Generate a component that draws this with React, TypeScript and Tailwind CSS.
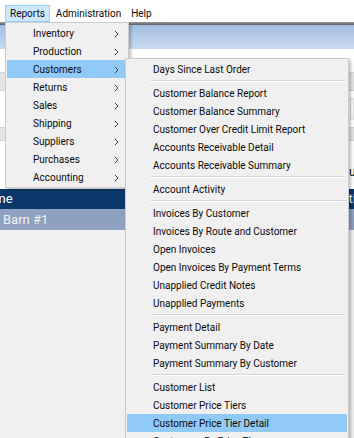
import React from "react";

const reportItems = [
  "Inventory",
  "Production",
  "Customers",
  "Returns",
  "Sales",
  "Shipping",
  "Suppliers",
  "Purchases",
  "Accounting",
];

// "-" marks a separator
const customerItems = [
  "Days Since Last Order",
  "-",
  "Customer Balance Report",
  "Customer Balance Summary",
  "Customer Over Credit Limit Report",
  "Accounts Receivable Detail",
  "Accounts Receivable Summary",
  "-",
  "Account Activity",
  "-",
  "Invoices By Customer",
  "Invoices By Route and Customer",
  "Open Invoices",
  "Open Invoices By Payment Terms",
  "Unapplied Credit Notes",
  "Unapplied Payments",
  "-",
  "Payment Detail",
  "Payment Summary By Date",
  "Payment Summary By Customer",
  "-",
  "Customer List",
  "Customer Price Tiers",
  "Customer Price Tier Detail",
  "Customers By Price Tier",
];

function Chevron() {
  return (
    <svg width="5" height="8" viewBox="0 0 5 8" className="shrink-0">
      <path d="M0.8 0.8 L4 4 L0.8 7.2" fill="none" stroke="#404040" strokeWidth="1" />
    </svg>
  );
}

export default function App() {
  return (
    <div className="relative h-[438px] w-[354px] overflow-hidden bg-[#f0f0f0] font-['Roboto',sans-serif] text-[10px] text-[#0a0a0a]">
      {/* window behind the menus */}
      <div className="flex flex-col">
        <div className="flex h-[22px] items-start bg-white pl-[5px] pt-[5px]">
          <div className="h-[17px] border border-[#99d1ff] bg-[#cce8ff] px-[4px] pt-[1px] leading-[14px]">Reports</div>
          <div className="pl-[6px] pr-[10px] pt-[1px] leading-[16px]">Administration</div>
          <div className="pt-[1px] leading-[16px]">Help</div>
        </div>
        <div className="h-[3px] bg-gradient-to-b from-[#9a9a9a] to-[#5f5f5f]" />
        <div className="h-[24px] bg-gradient-to-b from-[#a0bddf] to-[#cbdcef]" />
        <div className="h-[23px] bg-white" />
        <div className="h-[19px] border-y border-[#d4d4d4] bg-[#e4e4e4]" />
        <div className="flex h-[36px] items-center bg-white pl-[350px]">
          <div className="h-[22px] w-[10px] border border-[#dcdcdc] bg-white" />
        </div>
        <div className="h-[14px] border-y border-[#d4d4d4] bg-[#e4e4e4]" />
        <div className="flex h-[48px] items-center bg-white">
          <div className="ml-auto mr-[-8px] mt-[14px] text-[12px]">Due</div>
        </div>
        <div className="flex h-[20px] items-center justify-between bg-[#0a386b] text-[13px] text-white">
          <span className="-ml-[22px]">Name</span>
          <span className="-mr-[15px]">Active</span>
        </div>
        <div className="flex h-[21px] items-center bg-[#8ea1c1] pl-[3px] text-[13px] text-[#f4f4f4]">Barn #1</div>
      </div>

      {/* Reports dropdown */}
      <div className="absolute left-[5px] top-[22px] w-[124px] border border-[#cccccc] bg-[#f0f0f0] p-[1px] shadow-[2px_2px_3px_rgba(0,0,0,0.25)]">
        {reportItems.map((item) => (
          <div
            key={item}
            className={
              "flex h-[18px] items-center pl-[26px] pr-[8px] pt-[1px] " +
              (item === "Customers" ? "bg-[#91c9f7]" : "")
            }
          >
            <span className="flex-1">{item}</span>
            <Chevron />
          </div>
        ))}
      </div>

      {/* Customers submenu */}
      <div className="absolute left-[125px] top-[58px] w-[224px] border border-[#cccccc] bg-[#f0f0f0] p-[1px] shadow-[2px_2px_3px_rgba(0,0,0,0.25)]">
        {customerItems.map((item, i) =>
          item === "-" ? (
            <div key={i} className="flex h-[6px] items-center pl-[23px] pr-[1px]">
              <div className="h-[2px] w-full border-t border-[#d7d7d7] border-b border-b-white" />
            </div>
          ) : (
            <div
              key={i}
              className={
                "flex h-[18px] items-center pl-[26px] pt-[1px] " +
                (item === "Customer Price Tier Detail" ? "bg-[#91c9f7]" : "")
              }
            >
              {item}
            </div>
          )
        )}
      </div>
    </div>
  );
}
